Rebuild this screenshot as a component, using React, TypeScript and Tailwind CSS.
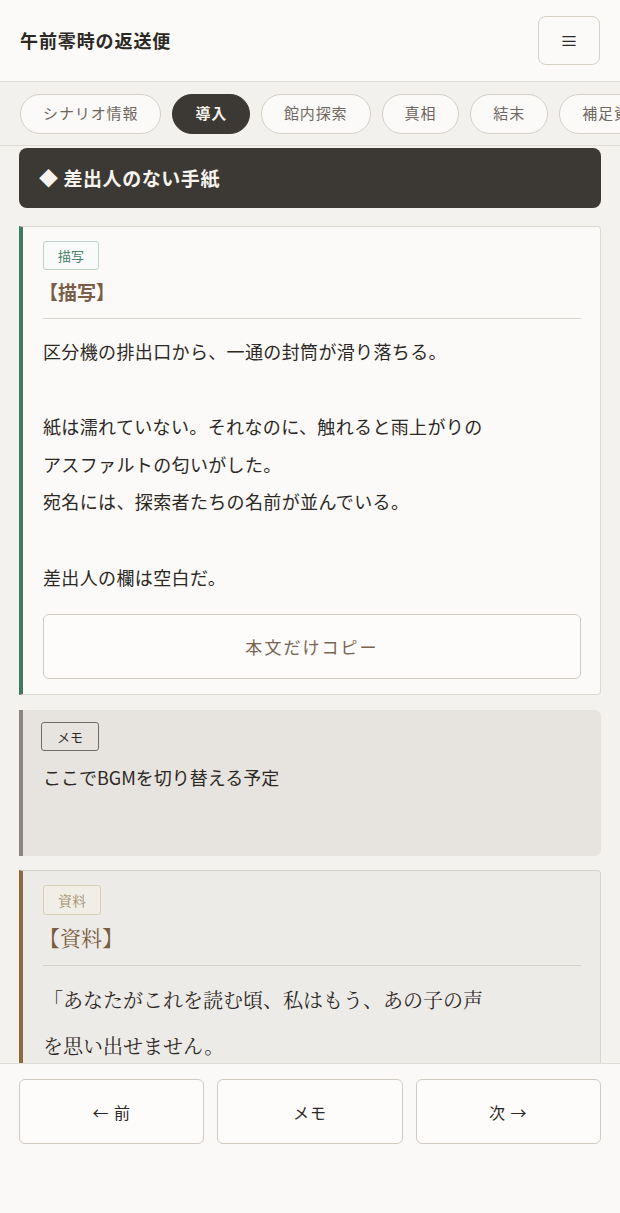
import React from "react";

const sans = "font-['Noto_Sans_CJK_JP','Noto_Sans',sans-serif]";
const serif = "font-['Noto_Serif_CJK_JP','Liberation_Serif','Noto_Sans_CJK_JP',serif]";

const tabs = ["シナリオ情報", "導入", "館内探索", "真相", "結末", "補足資料"];

export default function App() {
  return (
    <div className={`${sans} h-screen flex flex-col overflow-hidden bg-[#f4f2ee] text-[#2c2824]`}>
      {/* Header */}
      <header className="h-[82px] shrink-0 flex items-center justify-between pl-[20px] pr-[20px] bg-[#fbfaf8] border-b border-[#e0dcd6]">
        <h1 className="text-[18px] font-bold tracking-[0.05em] text-[#2c2824]">午前零時の返送便</h1>
        <button className="w-[62px] h-[49px] rounded-[8px] border border-[#d6d0c9] bg-[#fbfaf8] text-[18px] text-[#2c2824] flex items-center justify-center">
          ≡
        </button>
      </header>

      {/* Tabs */}
      <nav className="h-[64px] shrink-0 flex items-center gap-[11px] pl-[20px] pr-[19px] bg-[#f3f1ed] border-b border-[#e0dcd6] overflow-hidden">
        {tabs.map((t) => (
          <span
            key={t}
            className={
              t === "導入"
                ? "shrink-0 h-[40px] px-[22px] flex items-center rounded-full bg-[#3c3833] border border-[#3c3833] text-[15px] font-bold tracking-[0.05em] text-[#f6f3ee]"
                : "shrink-0 h-[40px] px-[22px] flex items-center rounded-full bg-[#fbfaf8] border border-[#d5cfc8] text-[15px] tracking-[0.06em] text-[#6f675f]"
            }
          >
            {t}
          </span>
        ))}
      </nav>

      {/* Content */}
      <main className="flex-1 overflow-hidden px-[19px] pt-[2px]">
        <div className="h-[60px] rounded-[8px] bg-[#3c3833] flex items-center px-[20px] text-[19px] font-bold tracking-[0.03em] text-[#f6f3ee]">
          ◆ 差出人のない手紙
        </div>

        {/* 描写 */}
        <section className="mt-[18px] bg-[#fbfaf8] border border-[#dcd8d2] border-l-[4px] border-l-[#3f7b63] rounded-r-[4px] pl-[20px] pr-[19px] pt-[14px] pb-[15px]">
          <span className="inline-flex h-[29px] items-center px-[14px] border border-[#bcd3c7] rounded-[3px] text-[13px] text-[#4a8068] bg-[#f8fbf9]">
            描写
          </span>
          <h2 className="mt-[6px] text-[19px] font-bold text-[#7b5e48] leading-[32px] -ml-[4px]">【描写】</h2>
          <div className="mt-[10px] border-t border-[#d9d5cf]" />
          <p className="mt-[14px] text-[18px] leading-[37.6px] tracking-[0.02em] whitespace-pre-line text-[#2c2824]">
            {"区分機の排出口から、一通の封筒が滑り落ちる。\n\n紙は濡れていない。それなのに、触れると雨上がりの\nアスファルトの匂いがした。\n宛名には、探索者たちの名前が並んでいる。\n\n差出人の欄は空白だ。"}
          </p>
          <button className="mt-[18px] w-full h-[65px] rounded-[6px] border border-[#d0cac3] bg-[#fdfcfb] text-[17px] tracking-[0.12em] text-[#7a6552]">
            本文だけコピー
          </button>
        </section>

        {/* メモ */}
        <section className="mt-[15px] min-h-[146px] bg-[#e7e4df] border-l-[4px] border-l-[#8b857d] rounded-r-[6px] pl-[18px] pr-[19px] pt-[12px] pb-[16px]">
          <span className="inline-flex h-[29px] items-center px-[15px] border border-[#6f6a64] rounded-[3px] text-[13px] text-[#2c2824]">
            メモ
          </span>
          <p className="mt-[10px] pl-[2px] text-[18px] leading-[32px] text-[#2c2824]">ここでBGMを切り替える予定</p>
        </section>

        {/* 資料 */}
        <section className="mt-[14px] bg-[#edebe7] border border-[#d9d5cf] border-l-[4px] border-l-[#8b6b3d] rounded-r-[4px] pl-[20px] pr-[19px] pt-[14px] pb-[16px]">
          <span className={`${serif} inline-flex h-[30px] items-center px-[14px] border border-[#dacfb7] rounded-[3px] text-[14px] text-[#a08c66] bg-[#f1eee8]`}>
            資料
          </span>
          <h2 className={`${serif} mt-[5px] text-[21px] text-[#7a5c40] leading-[34px] -ml-[4px]`}>【資料】</h2>
          <div className="mt-[11px] border-t border-[#d6d2cb]" />
          <p className={`${serif} mt-[11px] text-[20px] leading-[46px] whitespace-pre-line text-[#2c2824]`}>
            {"「あなたがこれを読む頃、私はもう、あの子の声\nを思い出せません。\nだから、せめてこの手紙だけは"}
          </p>
        </section>
      </main>

      {/* Bottom nav */}
      <footer className="h-[150px] shrink-0 bg-[#faf9f7] border-t border-[#e0dcd6] px-[19px] pt-[15px]">
        <div className="grid grid-cols-3 gap-[13px]">
          {["← 前", "メモ", "次 →"].map((l) => (
            <button
              key={l}
              className="h-[65px] rounded-[6px] border border-[#d0cac3] bg-[#fdfcfb] text-[16px] tracking-[0.06em] text-[#2c2824]"
            >
              {l}
            </button>
          ))}
        </div>
      </footer>
    </div>
  );
}
